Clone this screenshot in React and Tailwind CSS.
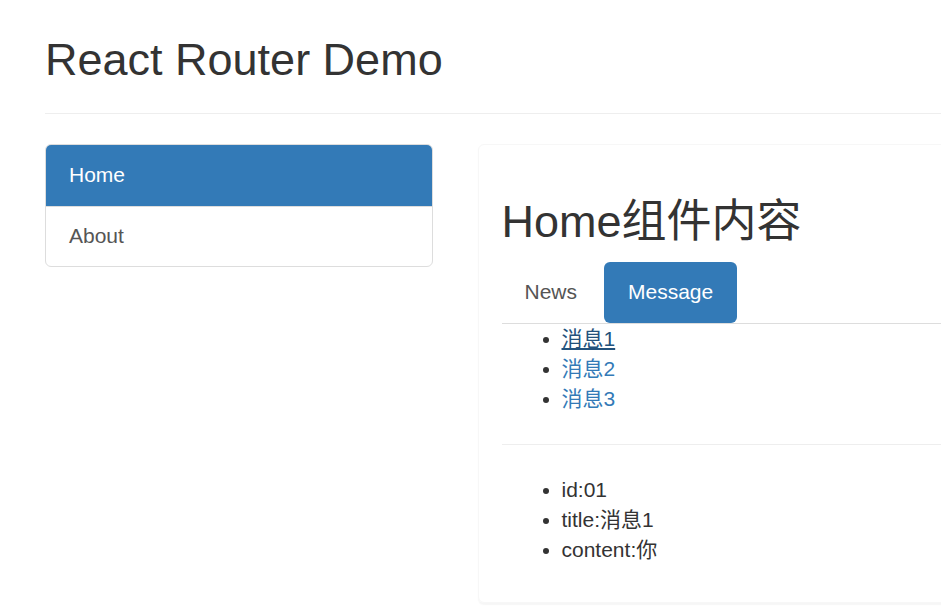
export default function App() {
    const messages = [
        { id: '01', title: '消息1', active: true },
        { id: '02', title: '消息2' },
        { id: '03', title: '消息3' },
    ];
    const detail = ['id:01', 'title:消息1', 'content:你'];

    return (
        <div
            className="w-[941px] h-[610px] overflow-hidden bg-white text-[#333] text-[21px] leading-[30px]"
            style={{ fontFamily: '"Liberation Sans", Arial, "Noto Sans CJK SC", sans-serif' }}
        >
            <div className="pl-[45px]">
                {/* page header */}
                <div className="pt-[35px] pb-[28px] border-b-[1.5px] border-[#eee]">
                    <h2 className="text-[45px] leading-[49.5px] font-normal">React Router Demo</h2>
                </div>

                <div className="flex mt-[30px] gap-[45px]">
                    {/* side nav */}
                    <div className="w-[388px] shrink-0 self-start border border-[#ddd] rounded-[6px] overflow-hidden">
                        <a className="block bg-[#337ab7] text-white px-[23px] py-[15.5px] leading-[30px]">Home</a>
                        <a className="block text-[#555] px-[23px] py-[14.5px] leading-[30px] border-t border-[#ddd]">About</a>
                    </div>

                    {/* panel */}
                    <div className="w-[560px] shrink-0 border border-[#f7f7f7] rounded-[6px] shadow-[0_1.5px_1.5px_rgba(0,0,0,0.04)] p-[22.5px] pr-0">
                        <h2 className="mt-[30px] mb-[15px] text-[45px] leading-[49.5px] font-normal">Home组件内容</h2>

                        <div className="flex border-b border-[#ddd]">
                            <a className="px-[23px] h-[61px] flex items-center text-[#555]">News</a>
                            <a className="ml-[4px] px-[24px] h-[61px] flex items-center bg-[#337ab7] text-white rounded-[6px]">Message</a>
                        </div>

                        <ul className="list-disc pl-[60px]">
                            {messages.map((m) => (
                                <li key={m.id}>
                                    <a className={m.active ? 'text-[#23527c] underline' : 'text-[#337ab7]'}>{m.title}</a>
                                </li>
                            ))}
                        </ul>

                        <hr className="mt-[30px] mb-[30px] border-0 border-t-[1.5px] border-[#eee]" />

                        <ul className="list-disc pl-[60px] mb-[15px]">
                            {detail.map((d) => (
                                <li key={d}>{d}</li>
                            ))}
                        </ul>
                    </div>
                </div>
            </div>
        </div>
    );
}
